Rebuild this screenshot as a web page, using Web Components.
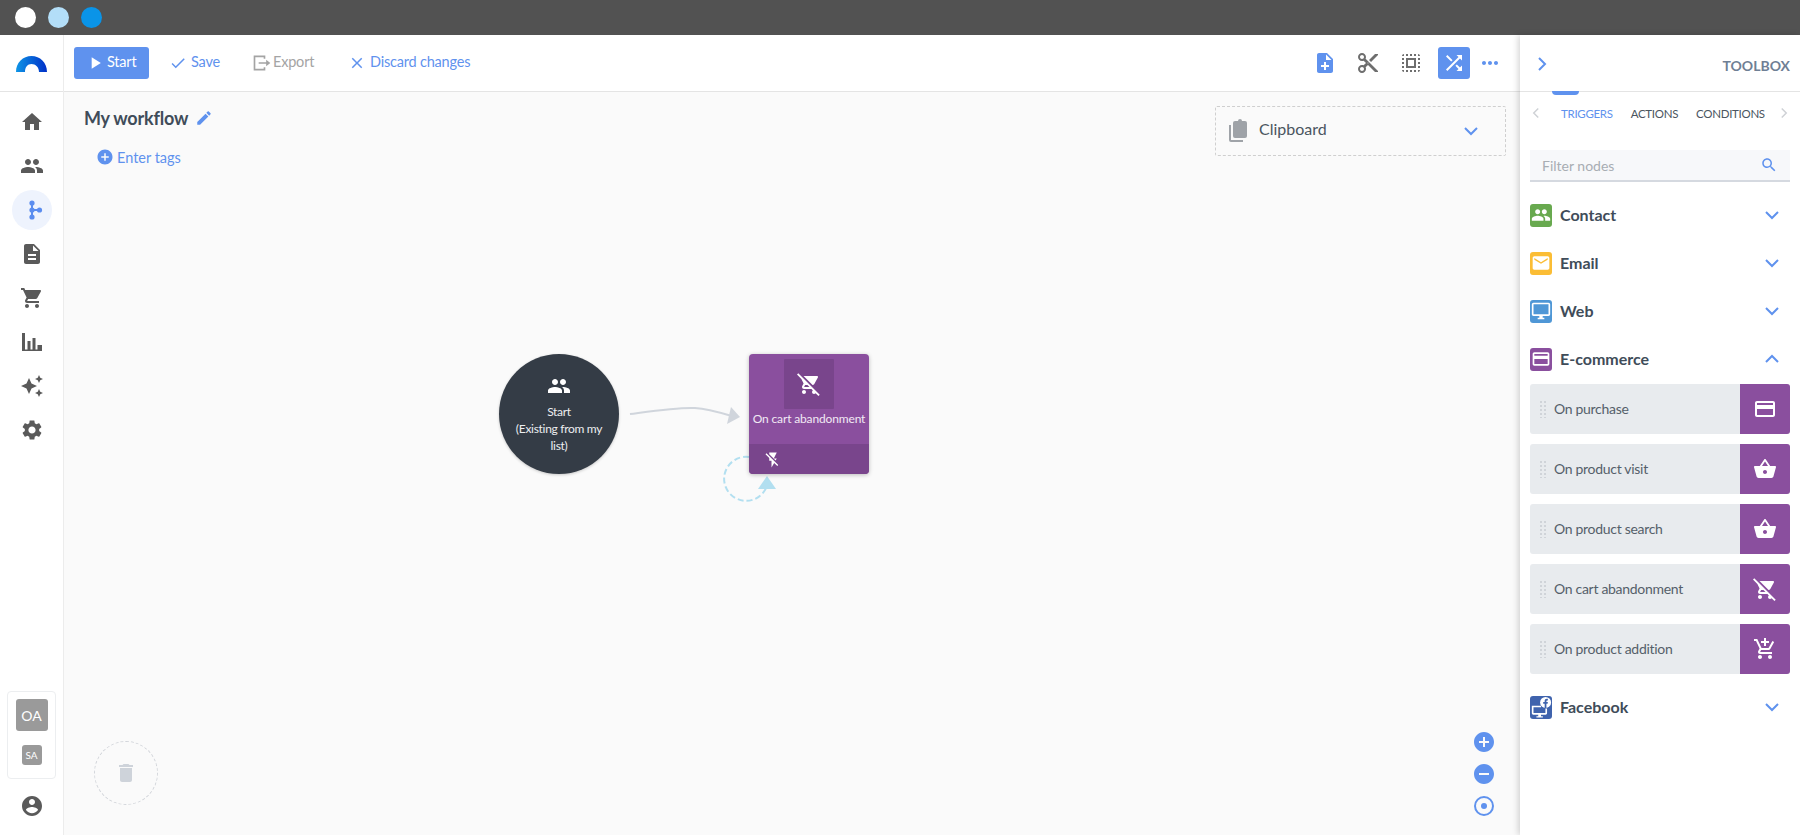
<!DOCTYPE html>
<html lang="en">
<head>
<meta charset="utf-8">
<title>My workflow</title>
<style>
  html, body { margin: 0; height: 835px; overflow: hidden; }
  body { font-family: "Lato", "Open Sans", sans-serif; color: #404c59; display: flex; flex-direction: column; }
</style>
</head>
<body>
<window-bar></window-bar>
<app-shell>
  <side-nav slot="nav"></side-nav>
  <work-toolbar slot="toolbar"></work-toolbar>
  <flow-canvas slot="canvas"></flow-canvas>
  <tool-box slot="box">
    <tool-category name="group" color="#68a94f" label="Contact"></tool-category>
    <tool-category name="email" color="#fbbd35" label="Email"></tool-category>
    <tool-category name="desktop" color="#4f97d6" label="Web"></tool-category>
    <tool-category name="card" color="#8a4f9e" label="E-commerce" open>
      <tool-item name="card" label="On purchase"></tool-item>
      <tool-item name="basket" label="On product visit"></tool-item>
      <tool-item name="basket" label="On product search"></tool-item>
      <tool-item name="cartoff" label="On cart abandonment"></tool-item>
      <tool-item name="cartadd" label="On product addition"></tool-item>
    </tool-category>
    <tool-category name="fb" color="#3f63ad" label="Facebook"></tool-category>
  </tool-box>
</app-shell>

<script>
const p = d => `<path d="${d}"/>`;
const s = d => `<path d="${d}" fill="none" stroke="currentColor" stroke-width="2"/>`;
const ICONS = {
  home: p("M10 20v-6h4v6h5v-8h3L12 3 2 12h3v8z"),
  group: p("M16 11c1.66 0 2.99-1.34 2.99-3S17.66 5 16 5c-1.66 0-3 1.34-3 3s1.34 3 3 3zm-8 0c1.66 0 2.99-1.34 2.99-3S9.66 5 8 5C6.34 5 5 6.34 5 8s1.34 3 3 3zm0 2c-2.33 0-7 1.17-7 3.5V19h14v-2.5c0-2.33-4.67-3.5-7-3.5zm8 0c-.29 0-.62.02-.97.05 1.16.84 1.97 1.97 1.97 3.45V19h6v-2.5c0-2.33-4.67-3.5-7-3.5z"),
  flow: `<path d="M12 5v14M12 12h7" fill="none" stroke="currentColor" stroke-width="2"/><circle cx="12" cy="5" r="2.6" fill="currentColor"/><circle cx="12" cy="19" r="2.6" fill="currentColor"/><circle cx="12" cy="12" r="2.6" fill="currentColor"/><circle cx="19.5" cy="12" r="2.6" fill="currentColor"/>`,
  doc: p("M14 2H6c-1.1 0-1.99.9-1.99 2L4 20c0 1.1.89 2 1.99 2H18c1.1 0 2-.9 2-2V8l-6-6zm2 16H8v-2h8v2zm0-4H8v-2h8v2zm-3-5V3.5L18.5 9H13z"),
  cart: p("M7 18c-1.1 0-1.99.9-1.99 2S5.9 22 7 22s2-.9 2-2-.9-2-2-2zM1 2v2h2l3.6 7.59-1.35 2.45c-.16.28-.25.61-.25.96 0 1.1.9 2 2 2h12v-2H7.42c-.14 0-.25-.11-.25-.25l.03-.12.9-1.63h7.45c.75 0 1.41-.41 1.75-1.03l3.58-6.49c.08-.14.12-.31.12-.48 0-.55-.45-1-1-1H5.21l-.94-2H1zm16 16c-1.1 0-1.99.9-1.99 2s.89 2 1.99 2 2-.9 2-2-.9-2-2-2z"),
  chart: p("M2 3h3v18H2zM7.500 11h3v10h-3zM12.500 8h3v13h-3zM17.500 15H22v6h-4.500zM2 19.500h20V21H2z"),
  spark: p("M19 9l1.25-2.75L23 5l-2.75-1.25L19 1l-1.25 2.75L15 5l2.75 1.25L19 9zm-7.5.5L9 4 6.5 9.5 1 12l5.5 2.5L9 20l2.5-5.5L17 12l-5.5-2.5zM19 15l-1.25 2.75L15 19l2.75 1.25L19 23l1.25-2.75L23 19l-2.75-1.25L19 15z"),
  gear: p("M19.14 12.94c.04-.3.06-.61.06-.94 0-.32-.02-.64-.07-.94l2.03-1.58c.18-.14.23-.41.12-.61l-1.92-3.32c-.12-.22-.37-.29-.59-.22l-2.39.96c-.5-.38-1.03-.7-1.62-.94l-.36-2.54c-.04-.24-.24-.41-.48-.41h-3.84c-.24 0-.43.17-.47.41l-.36 2.54c-.59.24-1.13.57-1.62.94l-2.39-.96c-.22-.08-.47 0-.59.22L2.74 8.87c-.12.21-.08.47.12.61l2.03 1.58c-.05.3-.09.63-.09.94s.02.64.07.94l-2.03 1.58c-.18.14-.23.41-.12.61l1.92 3.32c.12.22.37.29.59.22l2.39-.96c.5.38 1.03.7 1.62.94l.36 2.54c.05.24.24.41.48.41h3.84c.24 0 .44-.17.47-.41l.36-2.54c.59-.24 1.13-.56 1.62-.94l2.39.96c.22.08.47 0 .59-.22l1.92-3.32c.12-.22.07-.47-.12-.61l-2.01-1.58zM12 15.6c-1.98 0-3.6-1.62-3.6-3.6s1.62-3.6 3.6-3.6 3.6 1.62 3.6 3.6-1.62 3.6-3.6 3.6z"),
  account: p("M12 2C6.48 2 2 6.48 2 12s4.48 10 10 10 10-4.48 10-10S17.52 2 12 2zm0 3c1.66 0 3 1.34 3 3s-1.34 3-3 3-3-1.34-3-3 1.34-3 3-3zm0 14.2c-2.5 0-4.71-1.28-6-3.22.03-1.99 4-3.08 6-3.08 1.99 0 5.97 1.09 6 3.08-1.29 1.94-3.5 3.22-6 3.22z"),
  play: p("M8 5v14l11-7z"),
  check: p("M9 16.17L4.83 12l-1.42 1.41L9 19 21 7l-1.41-1.41z"),
  close: p("M19 6.41L17.59 5 12 10.59 6.41 5 5 6.41 10.59 12 5 17.59 6.41 19 12 13.41 17.59 19 19 17.59 13.41 12z"),
  export: s("M15 7V4H3v16h12v-3") + p("M8 11h9V8l5 4-5 4v-3H8z"),
  edit: p("M3 17.25V21h3.75L17.81 9.94l-3.75-3.75L3 17.25zM20.71 7.04c.39-.39.39-1.02 0-1.41l-2.34-2.34c-.39-.39-1.02-.39-1.41 0l-1.83 1.83 3.75 3.75 1.83-1.83z"),
  add: p("M12 2C6.48 2 2 6.48 2 12s4.48 10 10 10 10-4.48 10-10S17.52 2 12 2zm5 11h-4v4h-2v-4H7v-2h4V7h2v4h4v2z"),
  remove: p("M12 2C6.48 2 2 6.48 2 12s4.48 10 10 10 10-4.48 10-10S17.52 2 12 2zm5 11H7v-2h10v2z"),
  target: `<circle cx="12" cy="12" r="9" fill="none" stroke="currentColor" stroke-width="2"/><circle cx="12" cy="12" r="3" fill="currentColor"/>`,
  noteadd: p("M14 2H6c-1.1 0-1.99.9-1.99 2L4 20c0 1.1.89 2 1.99 2H18c1.1 0 2-.9 2-2V8l-6-6zm2 14h-3v3h-2v-3H8v-2h3v-3h2v3h3v2zm-3-7V3.5L18.5 9H13z"),
  cut: p("M9.64 7.64c.23-.5.36-1.05.36-1.64 0-2.21-1.79-4-4-4S2 3.79 2 6s1.79 4 4 4c.59 0 1.14-.13 1.64-.36L10 12l-2.36 2.36C7.14 14.13 6.59 14 6 14c-2.21 0-4 1.79-4 4s1.79 4 4 4 4-1.79 4-4c0-.59-.13-1.14-.36-1.64L12 14l7 7h3v-1L9.64 7.64zM6 8c-1.1 0-2-.89-2-2s.9-2 2-2 2 .89 2 2-.9 2-2 2zm0 12c-1.1 0-2-.89-2-2s.9-2 2-2 2 .89 2 2-.9 2-2 2zm6-7.5c-.28 0-.5-.22-.5-.5s.22-.5.5-.5.5.22.5.5-.22.5-.5.5zM19 3l-6 6 2 2 7-7V3z"),
  selectall: p("M3 5h2V3c-1.1 0-2 .9-2 2zm0 8h2v-2H3v2zm4 8h2v-2H7v2zM3 9h2V7H3v2zm10-6h-2v2h2V3zm6 0v2h2c0-1.1-.9-2-2-2zM5 21v-2H3c0 1.1.9 2 2 2zm-2-4h2v-2H3v2zM9 3H7v2h2V3zm2 18h2v-2h-2v2zm8-8h2v-2h-2v2zm0 8c1.1 0 2-.9 2-2h-2v2zm0-12h2V7h-2v2zm0 8h2v-2h-2v2zm-4 4h2v-2h-2v2zm0-16h2V3h-2v2zM7 17h10V7H7v10zm2-8h6v6H9V9z"),
  shuffle: p("M10.59 9.17L5.41 4 4 5.41l5.17 5.17 1.42-1.41zM14.5 4l2.04 2.04L4 18.59 5.41 20 17.96 7.46 20 9.5V4h-5.5zm.33 9.41l-1.41 1.41 3.13 3.13L14.5 20H20v-5.5l-2.04 2.04-3.13-3.13z"),
  more: p("M6 10c-1.1 0-2 .9-2 2s.9 2 2 2 2-.9 2-2-.9-2-2-2zm12 0c-1.1 0-2 .9-2 2s.9 2 2 2 2-.9 2-2-.9-2-2-2zm-6 0c-1.1 0-2 .9-2 2s.9 2 2 2 2-.9 2-2-.9-2-2-2z"),
  down: s("M6 9l6 6 6-6"),
  up: s("M6 15l6-6 6 6"),
  right: s("M9 6l6 6-6 6"),
  left: s("M15 6l-6 6 6 6"),
  search: p("M15.5 14h-.79l-.28-.27C15.41 12.59 16 11.11 16 9.5 16 5.91 13.09 3 9.5 3S3 5.91 3 9.5 5.91 16 9.5 16c1.61 0 3.09-.59 4.23-1.57l.27.28v.79l5 4.99L20.49 19l-4.99-5zm-6 0C7.01 14 5 11.99 5 9.5S7.01 5 9.5 5 14 7.01 14 9.5 11.99 14 9.5 14z"),
  clipboard: p("M9 2h3a2 2 0 0 1 4 0h3a2 2 0 0 1 2 2v13a2 2 0 0 1-2 2H9a2 2 0 0 1-2-2V4a2 2 0 0 1 2-2zM3 6h2v15h12v2H5a2 2 0 0 1-2-2z"),
  cartoff: p("M22.73 22.73L2.77 2.77 2 2l-.73-.73L0 2.54l4.39 4.39 2.21 4.66-1.35 2.45c-.16.28-.25.61-.25.96 0 1.1.9 2 2 2h7.46l1.38 1.38c-.5.36-.83.95-.83 1.62 0 1.1.89 2 1.99 2 .67 0 1.26-.33 1.62-.84L21.46 24l1.27-1.27zM7.42 15c-.14 0-.25-.11-.25-.25l.03-.12.9-1.63h2.36l2 2H7.42zm8.13-2c.75 0 1.41-.41 1.75-1.03l3.58-6.49c.08-.14.12-.31.12-.48 0-.55-.45-1-1-1H6.54l9.01 9zM7 18c-1.1 0-1.99.9-1.99 2S5.9 22 7 22s2-.9 2-2-.9-2-2-2z"),
  basket: p("M17.21 9l-4.38-6.56c-.19-.28-.51-.42-.83-.42-.32 0-.64.14-.83.43L6.79 9H2c-.55 0-1 .45-1 1 0 .09.01.18.04.27l2.54 9.27c.23.84 1 1.46 1.92 1.46h13c.92 0 1.69-.62 1.93-1.46l2.54-9.27L23 10c0-.55-.45-1-1-1h-4.79zM9 9l3-4.4L15 9H9zm3 8c-1.1 0-2-.9-2-2s.9-2 2-2 2 .9 2 2-.9 2-2 2z"),
  cartadd: p("M11 9h2V6h3V4h-3V1h-2v3H8v2h3v3zm-4 9c-1.1 0-1.99.9-1.99 2S5.9 22 7 22s2-.9 2-2-.9-2-2-2zm10 0c-1.1 0-1.99.9-1.99 2s.89 2 1.99 2 2-.9 2-2-.9-2-2-2zm-9.83-3.25l.03-.12.9-1.63h7.45c.75 0 1.41-.41 1.75-1.03l3.86-7.01L19.42 4h-.01l-1.1 2-2.76 5H8.53l-.13-.27L6.16 6l-.95-2-.94-2H1v2h2l3.6 7.59-1.35 2.45c-.16.28-.25.61-.25.96 0 1.1.9 2 2 2h12v-2H7.42c-.13 0-.25-.11-.25-.25z"),
  card: p("M20 4H4c-1.11 0-1.99.89-1.99 2L2 18c0 1.11.89 2 2 2h16c1.11 0 2-.89 2-2V6c0-1.11-.89-2-2-2zm0 14H4v-6h16v6zm0-10H4V6h16v2z"),
  email: p("M20 4H4c-1.1 0-1.99.9-1.99 2L2 18c0 1.1.9 2 2 2h16c1.1 0 2-.9 2-2V6c0-1.1-.9-2-2-2zm0 4l-8 5-8-5V6l8 5 8-5v2z"),
  desktop: p("M21 2H3c-1.1 0-2 .9-2 2v12c0 1.1.9 2 2 2h7v2H8v2h8v-2h-2v-2h7c1.1 0 2-.9 2-2V4c0-1.1-.9-2-2-2zm0 14H3V4h18v12z"),
  flashoff: p("M3.27 3L2 4.27l5 5V13h3v9l3.58-6.14L17.73 20 19 18.73 3.27 3zM17 10h-4l4-8H7v2.18l8.46 8.46L17 10z"),
  trash: p("M6 19c0 1.1.9 2 2 2h8c1.1 0 2-.9 2-2V7H6v12zM19 4h-3.5l-1-1h-5l-1 1H5v2h14V4z"),
  fb: p("M2 10.5h10v1.8H3.8v6.2h13v-5h1.8v5.4c0 .9-.7 1.6-1.6 1.6h-5v1.5h2v1.4H7v-1.4h2v-1.5H3.6c-.9 0-1.6-.7-1.6-1.6z") + `<circle cx="17" cy="7" r="6"/><path d="M16 13v-4.6h-1.6V6.5H16V5.3c0-1.6 1-2.4 2.3-2.4h1.2v1.9h-.8c-.6 0-.8.3-.8.8v.9h1.6l-.3 1.9h-1.3V13z" fill="#3f63ad"/>`
};

class UiIcon extends HTMLElement {
  connectedCallback() {
    const size = this.getAttribute("size") || 24;
    const name = this.getAttribute("name");
    this.attachShadow({ mode: "open" });
    this.shadowRoot.innerHTML = `
    <style>
      :host { display: inline-flex; flex: none; width: ${size}px; height: ${size}px; color: ${this.getAttribute("color") || "inherit"}; }
      svg { display: block; width: 100%; height: 100%; fill: currentColor; }
    </style>
    <svg viewBox="0 0 24 24" aria-hidden="true">${ICONS[name] || ""}</svg>`;
  }
}

class WindowBar extends HTMLElement {
  constructor() {
    super();
    this.attachShadow({ mode: "open" }).innerHTML = `
    <style>
      :host { display: flex; flex: none; align-items: center; gap: 12px; height: 35px; padding-left: 15px; background: #525252; box-sizing: border-box; }
      i { width: 21px; height: 21px; border-radius: 50%; }
    </style>
    <i style="background:#fff"></i><i style="background:#b3def8"></i><i style="background:#0a94e8"></i>`;
  }
}

class AppShell extends HTMLElement {
  constructor() {
    super();
    this.attachShadow({ mode: "open" }).innerHTML = `
    <style>
      :host { display: grid; flex: 1; min-height: 0; grid-template-columns: 64px 1fr 280px; grid-template-rows: 57px 1fr; background: #fff; }
      ::slotted([slot=nav]) { grid-row: 1 / 3; grid-column: 1; }
      ::slotted([slot=toolbar]) { grid-row: 1; grid-column: 2; }
      ::slotted([slot=canvas]) { grid-row: 2; grid-column: 2; }
      ::slotted([slot=box]) { grid-row: 1 / 3; grid-column: 3; }
    </style>
    <slot name="nav"></slot><slot name="toolbar"></slot><slot name="canvas"></slot><slot name="box"></slot>`;
  }
}

class SideNav extends HTMLElement {
  constructor() {
    super();
    const items = ["home", "group", "flow", "doc", "cart", "chart", "spark", "gear"];
    this.attachShadow({ mode: "open" }).innerHTML = `
    <style>
      :host { display: flex; flex-direction: column; background: #fff; border-right: 1px solid #ececec; box-sizing: border-box; color: #5a5a5a; min-height: 0; }
      .logo { height: 57px; flex: none; box-sizing: border-box; border-bottom: 1px solid #e4e4e4; display: flex; justify-content: center; padding-top: 21px; }
      nav { display: flex; flex-direction: column; align-items: center; padding-top: 8px; }
      a { width: 40px; height: 44px; display: flex; align-items: center; justify-content: center; position: relative; }
      a.on { color: #5b8def; }
      a.on::before { content: ""; position: absolute; left: 0; top: 2px; width: 40px; height: 40px; border-radius: 50%; background: #eef3fd; }
      a ui-icon { position: relative; }
      .orgs { margin: auto 7px 15px; height: 88px; box-sizing: border-box; border: 1px solid #eceef0; border-radius: 4px; display: flex; flex-direction: column; align-items: center; padding-top: 7px; gap: 14px; }
      .orgs span { background: #9a9a9a; color: #fff; display: flex; align-items: center; justify-content: center; }
      .oa { width: 32px; height: 32px; border-radius: 3px; font-size: 14px; }
      .sa { width: 20px; height: 20px; border-radius: 3px; font-size: 10px; }
      .me { align-self: center; margin-bottom: 17px; }
    </style>
    <div class="logo">
      <svg width="31" height="16" viewBox="0 0 31 16">
        <defs><linearGradient id="lg" x1="0" x2="1" y1="0" y2="0"><stop offset="0" stop-color="#0e95e6"/><stop offset="1" stop-color="#0030c8"/></linearGradient></defs>
        <path fill="url(#lg)" d="M0 16C0 6.5 7 0 15.500 0S31 6.500 31 16h-8C23 11 19.500 8 15.500 8S9 11 9 16z"/>
      </svg>
    </div>
    <nav>${items.map(n => `<a class="${n === "flow" ? "on" : ""}"><ui-icon name="${n}"></ui-icon></a>`).join("")}</nav>
    <div class="orgs"><span class="oa">OA</span><span class="sa">SA</span></div>
    <ui-icon class="me" name="account"></ui-icon>`;
  }
}

class ToolButton extends HTMLElement {
  constructor() {
    super();
    const icon = this.getAttribute("icon");
    const size = this.getAttribute("size") || 18;
    const gap = this.getAttribute("gap") || 4;
    this.attachShadow({ mode: "open" }).innerHTML = `
    <style>
      :host { display: inline-flex; align-items: center; gap: ${gap}px; height: 32px; font-size: 14.5px; letter-spacing: -.2px; color: #5f92ee; box-sizing: border-box; flex: none; }
      :host([primary]) { background: #5f92ee; color: #fff; border-radius: 3px; padding-left: 11px; }
      :host([muted]) { color: #a4a4a4; }
      .t { position: relative; top: -1px; }
    </style>
    <ui-icon name="${icon}" size="${size}"></ui-icon><span class="t"><slot></slot></span>`;
  }
}

class WorkToolbar extends HTMLElement {
  constructor() {
    super();
    this.attachShadow({ mode: "open" }).innerHTML = `
    <style>
      :host { display: flex; align-items: center; background: #fff; border-bottom: 1px solid #e4e4e4; padding: 0 18px 1px 10px; box-sizing: border-box; height: 57px; }
      .right { margin-left: auto; display: flex; align-items: center; gap: 11px; color: #6e6e6e; }
      .right > span { width: 32px; height: 32px; display: flex; align-items: center; justify-content: center; }
      .on { background: #5f92ee; color: #fff; border-radius: 3px; }
      .blue { color: #5f92ee; }
      .more { width: 24px !important; margin-left: -3px; }
    </style>
    <tool-button icon="play" size="20" gap="2" primary style="width:75px;margin-right:20px">Start</tool-button>
    <tool-button icon="check" style="width:83px">Save</tool-button>
    <tool-button icon="export" size="20" gap="1" muted style="width:96px">Export</tool-button>
    <tool-button icon="close">Discard changes</tool-button>
    <div class="right">
      <span class="blue"><ui-icon name="noteadd"></ui-icon></span>
      <span><ui-icon name="cut"></ui-icon></span>
      <span><ui-icon name="selectall"></ui-icon></span>
      <span class="on"><ui-icon name="shuffle"></ui-icon></span>
      <span class="blue more"><ui-icon name="more"></ui-icon></span>
    </div>`;
  }
}

class StartNode extends HTMLElement {
  constructor() {
    super();
    this.attachShadow({ mode: "open" }).innerHTML = `
    <style>
      :host { position: absolute; left: 435px; top: 262px; width: 120px; height: 120px; box-sizing: border-box; border-radius: 50%; background: #343c46; color: #eceef0; display: flex; flex-direction: column; align-items: center; padding-top: 20px; font-size: 12px; letter-spacing: -.3px; line-height: 17px; text-align: center; box-shadow: 0 1px 3px rgba(0,0,0,.2); }
      ui-icon { color: #fff; margin-bottom: 5px; }
      div { width: 100px; }
    </style>
    <ui-icon name="group" size="24"></ui-icon>
    <div><slot></slot></div>`;
  }
}

class ActionNode extends HTMLElement {
  constructor() {
    super();
    this.attachShadow({ mode: "open" }).innerHTML = `
    <style>
      :host { position: absolute; left: 685px; top: 262px; width: 120px; height: 120px; border-radius: 4px; overflow: hidden; background: #8a4f9e; color: #f1e9f4; display: flex; flex-direction: column; align-items: center; font-size: 12px; letter-spacing: -.15px; box-shadow: 0 1px 4px rgba(0,0,0,.25); }
      .ic { width: 50px; height: 50px; margin-top: 5px; background: #79458c; color: #fff; display: flex; align-items: center; justify-content: center; border-radius: 1px; }
      .lbl { margin-top: 2px; line-height: 16px; white-space: nowrap; }
      .foot { margin-top: auto; align-self: stretch; height: 30px; background: #79458c; display: flex; align-items: center; padding-left: 15px; padding-top: 1px; box-sizing: border-box; color: #fff; }
    </style>
    <div class="ic"><ui-icon name="cartoff" size="24"></ui-icon></div>
    <div class="lbl"><slot></slot></div>
    <div class="foot"><ui-icon name="flashoff" size="18"></ui-icon></div>`;
  }
}

class FlowCanvas extends HTMLElement {
  constructor() {
    super();
    this.attachShadow({ mode: "open" }).innerHTML = `
    <style>
      :host { display: flex; position: relative; justify-content: space-between; align-items: flex-start; background: #fafafa; padding: 14px 14px 0 20px; overflow: hidden; min-height: 0; }
      .head { position: relative; display: flex; flex-direction: column; }
      h1 { margin: 0; font-size: 18px; letter-spacing: -.2px; font-weight: 700; height: 24px; line-height: 24px; color: #404c59; display: flex; align-items: center; gap: 7px; }
      h1 ui-icon { color: #5f92ee; }
      .tags { margin: 15px 0 0 12px; height: 24px; display: flex; align-items: center; gap: 3px; font-size: 14.5px; color: #5f92ee; }
      .clip { position: relative; width: 291px; height: 50px; box-sizing: border-box; border: 1px dashed #cfcfcf; border-radius: 2px; display: flex; align-items: center; padding: 0 10px; font-size: 16px; color: #4a5560; }
      .clip .ci { color: #9fa3a8; margin-right: 9px; }
      .clip .t { position: relative; top: -3px; }
      .clip .ch { margin-left: auto; color: #5f92ee; margin-right: 12px; }
      svg.links { position: absolute; left: 0; top: 0; width: 1456px; height: 743px; }
      .trash { position: absolute; left: 30px; bottom: 30px; width: 64px; height: 64px; box-sizing: border-box; border: 1px dashed #d2d5da; border-radius: 50%; display: flex; align-items: center; justify-content: center; color: #ced3da; }
      .zoom { position: absolute; right: 24px; bottom: 17px; display: flex; flex-direction: column; gap: 8px; color: #5f92ee; }
    </style>
    <svg class="links" viewBox="64 92 1456 743">
      <path d="M630 414 C660 410 680 407 695 408 C708 409 718 412 732 416" fill="none" stroke="#d0d5dc" stroke-width="2"/>
      <path d="M740 417 L731 407 L727 424 Z" fill="#d0d5dc"/>
      <path d="M749 457 A22 22 0 1 0 768 481" fill="none" stroke="#b2dff0" stroke-width="2" stroke-dasharray="6 3"/>
      <path d="M767 476 L758 489 L776 489 Z" fill="#b2dff0"/>
    </svg>
    <div class="head">
      <h1>My workflow <ui-icon name="edit" size="18"></ui-icon></h1>
      <div class="tags"><ui-icon name="add" size="18"></ui-icon>Enter tags</div>
    </div>
    <div class="clip"><ui-icon class="ci" name="clipboard" size="24"></ui-icon><span class="t">Clipboard</span><ui-icon class="ch" name="down"></ui-icon></div>
    <start-node>Start<br>(Existing from my list)</start-node>
    <action-node>On cart abandonment</action-node>
    <div class="trash"><ui-icon name="trash"></ui-icon></div>
    <div class="zoom"><ui-icon name="add"></ui-icon><ui-icon name="remove"></ui-icon><ui-icon name="target"></ui-icon></div>`;
  }
}

class ToolBox extends HTMLElement {
  constructor() {
    super();
    this.attachShadow({ mode: "open" }).innerHTML = `
    <style>
      :host { display: block; position: relative; z-index: 2; background: #fff; box-shadow: -2px 0 6px rgba(0,0,0,.16); min-height: 0; overflow: hidden; }
      header { height: 57px; box-sizing: border-box; border-bottom: 1px solid #e4e4e4; display: flex; align-items: center; justify-content: space-between; padding: 2px 10px 0; color: #5f92ee; }
      header b { color: #6f7f95; font-size: 14px; font-weight: 700; padding-top: 2px; }
      .pip { position: absolute; left: 32px; top: 56px; width: 27px; height: 4px; background: #5f92ee; border-radius: 0 0 4px 4px; }
      .tabs { margin-top: 3px; height: 36px; padding-bottom: 1px; box-sizing: content-box; display: flex; align-items: center; padding-left: 7px; padding-right: 7px; font-size: 11.5px; letter-spacing: -.3px; color: #4a5560; }
      .tabs ui-icon { color: #cfd2d6; }
      .tabs span { margin-left: 16px; }
      .tabs span + span { margin-left: 18px; }
      .tabs .on { color: #5f92ee; }
      .tabs ui-icon:last-child { margin-left: auto; }
      .filter { margin: 18px 10px 9px; height: 32px; box-sizing: border-box; background: #f7f8fa; border-bottom: 2px solid #d5d9e0; display: flex; align-items: center; justify-content: space-between; padding: 0 12px; font-size: 14px; color: #a8adb3; }
      .filter ui-icon { color: #5f92ee; }
      .list { padding: 0 10px; }
    </style>
    <header><ui-icon name="right"></ui-icon><b>TOOLBOX</b></header>
    <div class="pip"></div>
    <div class="tabs">
      <ui-icon name="left" size="18"></ui-icon>
      <span class="on">TRIGGERS</span><span>ACTIONS</span><span>CONDITIONS</span>
      <ui-icon name="right" size="18"></ui-icon>
    </div>
    <div class="filter">Filter nodes<ui-icon name="search" size="18"></ui-icon></div>
    <div class="list"><slot></slot></div>`;
  }
}

class ToolCategory extends HTMLElement {
  constructor() {
    super();
    const open = this.hasAttribute("open");
    this.attachShadow({ mode: "open" }).innerHTML = `
    <style>
      :host { display: block; }
      .row { height: 48px; display: flex; align-items: center; gap: 8px; font-size: 16px; font-weight: 700; color: #404c59; }
      .lbl { position: relative; top: -1px; }
      .ic { width: 22px; height: 23px; border-radius: 3px; background: ${this.getAttribute("color")}; color: #fff; display: flex; align-items: center; justify-content: center; }
      .ch { margin-left: auto; margin-right: 6px; color: #5f92ee; }
      .items { display: flex; flex-direction: column; gap: 10px; margin: 1px 0 9px; }
    </style>
    <div class="row">
      <span class="ic"><ui-icon name="${this.getAttribute("name")}" size="${this.getAttribute("name") === "fb" ? 22 : 20}"></ui-icon></span>
      <span class="lbl">${this.getAttribute("label")}</span>
      <ui-icon class="ch" name="${open ? "up" : "down"}"></ui-icon>
    </div>
    ${open ? `<div class="items"><slot></slot></div>` : ""}`;
  }
}

class ToolItem extends HTMLElement {
  constructor() {
    super();
    this.attachShadow({ mode: "open" }).innerHTML = `
    <style>
      :host { display: flex; align-items: center; height: 50px; background: #e8ebee; border-radius: 3px; overflow: hidden; font-size: 14px; letter-spacing: -.3px; color: #555f6a; }
      .grip { width: 7px; height: 18px; margin: 0 8px 0 9px; background: radial-gradient(circle, #d0d4d9 1.1px, transparent 1.4px) 0 0 / 4px 4px; }
      .t { position: relative; top: -1px; }
      .ic { margin-left: auto; width: 50px; height: 50px; background: #8a4f9e; color: #fff; display: flex; align-items: center; justify-content: center; }
    </style>
    <span class="grip"></span><span class="t">${this.getAttribute("label")}</span>
    <span class="ic"><ui-icon name="${this.getAttribute("name")}"></ui-icon></span>`;
  }
}

customElements.define("ui-icon", UiIcon);
customElements.define("window-bar", WindowBar);
customElements.define("app-shell", AppShell);
customElements.define("side-nav", SideNav);
customElements.define("tool-button", ToolButton);
customElements.define("work-toolbar", WorkToolbar);
customElements.define("start-node", StartNode);
customElements.define("action-node", ActionNode);
customElements.define("flow-canvas", FlowCanvas);
customElements.define("tool-box", ToolBox);
customElements.define("tool-category", ToolCategory);
customElements.define("tool-item", ToolItem);
</script>
</body>
</html>
